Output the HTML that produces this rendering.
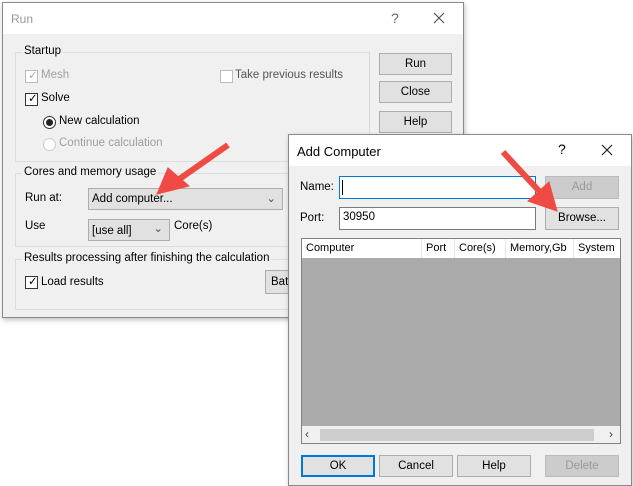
<!DOCTYPE html>
<html><head><meta charset="utf-8"><style>
body{margin:0;width:633px;height:486px;background:#fff;position:relative;overflow:hidden;font-family:"Liberation Sans",sans-serif;font-size:11.5px;color:#000}
.a{position:absolute}
.win{position:absolute;background:#f0f0f0;border:1px solid #8a8a8a;box-shadow:1px 2px 5px rgba(0,0,0,.25)}
.tb{position:absolute;left:0;right:0;top:0;background:#fff}
.grp{position:absolute;border:1px solid #dcdcdc}
.gl{position:absolute;background:#f0f0f0;padding:0 2px;top:-8px;left:6px}
.btn{position:absolute;background:#e1e1e1;border:1px solid #adadad;text-align:center;box-sizing:border-box}
.cb{position:absolute;width:11px;height:11px;border:1px solid #333;background:#fff}
.dis{color:#a0a0a0}
.inp{position:absolute;background:#fff;border:1px solid #7a7a7a;box-sizing:border-box}
.hd{position:absolute;top:0;height:19px;border-right:1px solid #e5e5e5;padding-left:4px;line-height:19px;font-size:11px;box-sizing:border-box}
</style></head><body>
<div class="win" style="left:2px;top:2px;width:460px;height:314px">
 <div class="tb" style="height:31px"></div>
 <div class="a" style="left:8px;top:9px;font-size:12px;color:#999">Run</div>
 <div class="a" style="left:388px;top:7px;font-size:14px;color:#666">?</div>
 <svg class="a" style="left:430px;top:9px" width="12" height="12"><path d="M1 1L11 11M11 1L1 11" stroke="#555" stroke-width="1.2"/></svg>
 <div class="grp" style="left:12px;top:49px;width:353px;height:108px"><span class="gl">Startup</span></div>
 <div class="cb" style="left:22px;top:67px;border-color:#bbb"></div><div class="a dis" style="left:25px;top:65px;color:#aaa">✓</div>
 <div class="a dis" style="left:38px;top:66px">Mesh</div>
 <div class="cb" style="left:217px;top:67px;border-color:#bbb"></div>
 <div class="a" style="left:232px;top:66px;color:#555">Take previous results</div>
 <div class="cb" style="left:22px;top:90px"></div><div class="a" style="left:25px;top:88px">✓</div>
 <div class="a" style="left:38px;top:89px">Solve</div>
 <div class="a" style="left:40px;top:113px;width:11px;height:11px;border:1px solid #333;border-radius:50%;background:#fff"></div>
 <div class="a" style="left:43px;top:116px;width:7px;height:7px;border-radius:50%;background:#222"></div>
 <div class="a" style="left:56px;top:112px">New calculation</div>
 <div class="a" style="left:40px;top:135px;width:11px;height:11px;border:1px solid #ccc;border-radius:50%;background:#fff"></div>
 <div class="a dis" style="left:56px;top:134px">Continue calculation</div>
 <div class="grp" style="left:12px;top:170px;width:353px;height:72px"><span class="gl">Cores and memory usage</span></div>
 <div class="a" style="left:22px;top:189px">Run at:</div>
 <div class="btn" style="left:85px;top:185px;width:195px;height:22px;text-align:left;padding-left:3px;line-height:20px">Add computer...<span style="position:absolute;right:6px;top:0;color:#555">⌄</span></div>
 <div class="a" style="left:22px;top:217px">Use</div>
 <div class="btn" style="left:85px;top:216px;width:82px;height:22px;text-align:left;padding-left:3px;line-height:22px">[use all]<span style="position:absolute;right:6px;top:-2px;color:#555">⌄</span></div>
 <div class="a" style="left:171px;top:217px">Core(s)</div>
 <div class="grp" style="left:12px;top:256px;width:353px;height:49px"><span class="gl">Results processing after finishing the calculation</span></div>
 <div class="cb" style="left:22px;top:273px"></div><div class="a" style="left:25px;top:271px">✓</div>
 <div class="a" style="left:38px;top:273px">Load results</div>
 <div class="btn" style="left:262px;top:267px;width:60px;height:24px;text-align:left;padding-left:5px;line-height:22px">Batch</div>
 <div class="btn" style="left:376px;top:50px;width:73px;height:22px;line-height:20px">Run</div>
 <div class="btn" style="left:376px;top:78px;width:73px;height:22px;line-height:20px">Close</div>
 <div class="btn" style="left:376px;top:108px;width:73px;height:22px;line-height:20px">Help</div>
</div>
<div class="win" style="left:288px;top:134px;width:342px;height:350px;z-index:2">
 <div class="tb" style="height:31px"></div>
 <div class="a" style="left:8px;top:9px;font-size:13px">Add Computer</div>
 <div class="a" style="left:269px;top:6px;font-size:14px">?</div>
 <svg class="a" style="left:312px;top:9px" width="12" height="12"><path d="M1 1L11 11M11 1L1 11" stroke="#222" stroke-width="1.2"/></svg>
 <div class="a" style="left:11px;top:46px">Name:</div>
 <div class="inp" style="left:50px;top:41px;width:197px;height:23px;border-color:#0078d7"><div class="a" style="left:2px;top:3px;width:1px;height:15px;background:#000"></div></div>
 <div class="btn" style="left:256px;top:41px;width:74px;height:23px;line-height:21px;color:#999;background:#ccc;border-color:#bbb">Add</div>
 <div class="a" style="left:11px;top:77px">Port:</div>
 <div class="inp" style="left:50px;top:72px;width:197px;height:23px;padding:3px 0 0 3px">30950</div>
 <div class="btn" style="left:256px;top:72px;width:74px;height:23px;line-height:21px">Browse...</div>
 <div class="a" style="left:12px;top:103px;width:318px;height:204px;border:1px solid #828282;background:#ababab;overflow:hidden">
  <div class="a" style="left:0;top:0;width:318px;height:19px;background:#fff"></div>
  <div class="hd" style="left:0;width:120px">Computer</div>
  <div class="hd" style="left:120px;width:33px">Port</div>
  <div class="hd" style="left:153px;width:51px">Core(s)</div>
  <div class="hd" style="left:204px;width:68px">Memory,Gb</div>
  <div class="hd" style="left:272px;width:60px">System</div>
  <div class="a" style="left:0;top:187px;width:318px;height:17px;background:#f0f0f0"></div>
  <div class="a" style="left:18px;top:190px;width:274px;height:12px;background:#cdcdcd"></div>
  <div class="a" style="left:3px;top:188px;font-size:12px;color:#444">‹</div>
  <div class="a" style="left:307px;top:188px;font-size:12px;color:#444">›</div>
 </div>
 <div class="btn" style="left:12px;top:320px;width:74px;height:22px;line-height:19px;border:2px solid #0078d7">OK</div>
 <div class="btn" style="left:90px;top:320px;width:74px;height:22px;line-height:20px">Cancel</div>
 <div class="btn" style="left:168px;top:320px;width:74px;height:22px;line-height:20px">Help</div>
 <div class="btn" style="left:256px;top:320px;width:74px;height:22px;line-height:20px;color:#999;background:#ccc;border-color:#bbb">Delete</div>
</div>
<svg class="a" style="left:0;top:0;z-index:3" width="633" height="486">
 <g fill="#f04a45" stroke="#f04a45">
  <line x1="228" y1="145" x2="178" y2="180" stroke-width="6"/>
  <polygon points="157,194 168,168 189,186" stroke-width="1"/>
  <line x1="503" y1="152" x2="540" y2="192" stroke-width="6"/>
  <polygon points="557,211 528,201 549,182" stroke-width="1"/>
 </g>
</svg>
</body></html>
